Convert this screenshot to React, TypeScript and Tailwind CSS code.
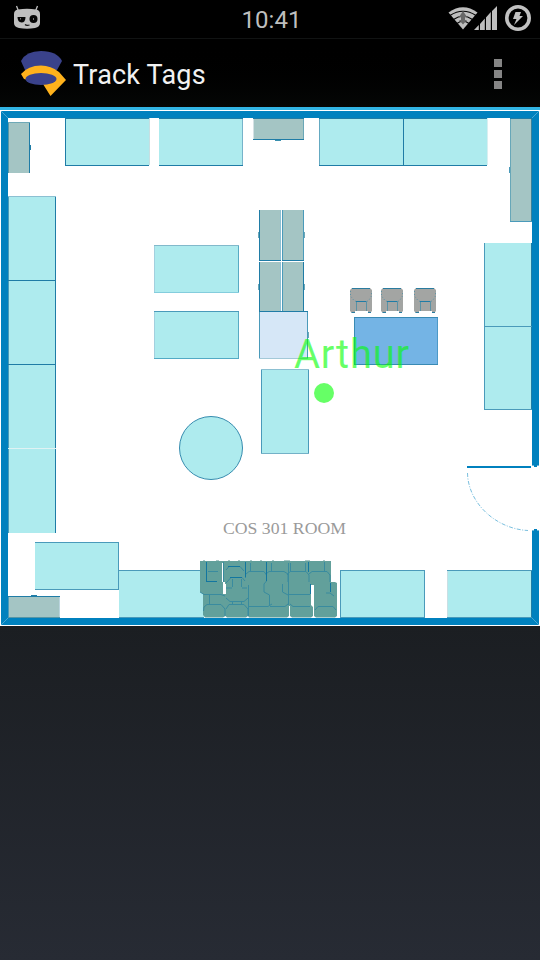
import React from "react";

const AQUA = "#aeebee";
const GREY = "#a4c5c4";
const DARK = "#1f7ca6";
const MID = "#4a9aba";
const PALE = "#8cc0d2";

type BoxProps = {
  x: number;
  y: number;
  w: number;
  h: number;
  fill?: string;
  t?: string;
  r?: string;
  b?: string;
  l?: string;
};

/* A piece of furniture with separately coloured one-pixel edges. */
function Box({ x, y, w, h, fill = AQUA, t, r, b, l }: BoxProps) {
  return (
    <g>
      <rect x={x} y={y} width={w} height={h} fill={fill} />
      {l && <rect x={x} y={y} width={1} height={h} fill={l} />}
      {r && <rect x={x + w - 1} y={y} width={1} height={h} fill={r} />}
      {t && <rect x={x} y={y} width={w} height={1} fill={t} />}
      {b && <rect x={x} y={y + h - 1} width={w} height={1} fill={b} />}
    </g>
  );
}

function Chair({ x }: { x: number }) {
  return (
    <g transform={`translate(${x} 288)`} shapeRendering="auto">
      <path d="M2 0H20L22 2V23L20 25H18V23H5V25H2L0 23V2Z" fill="#a3a5a3" />
      <path d="M2 .5H20M1.500 24.5H5M18 24.5H21" stroke="#2a7c9f" fill="none" />
      <path d="M.5 3V8L4 12.5L6 13.5H17L19 12L21.5 8V3" stroke="#5b92a5" fill="none" strokeDasharray="1 2" />
      <path d="M6 13.5H16.5" stroke="#1f7ca6" fill="none" />
      <path d="M6.5 14V23M16.5 14V23" stroke="#5b92a5" fill="none" />
    </g>
  );
}

function ChairPile() {
  return (
    <g shapeRendering="auto">
      <path
        d="M200 561H331V582H335L337 583V616L335 617.5H316L314 616V585H311V605L313 607V616L311 617.5H292L290 616V606H289V616L287 617.5H249L248 616L246 617.5H227L225.500 616L223 617.5H205L203 615V594L200 592Z"
        fill="#62a09b"
      />
      <path d="M222.500 563V582" stroke="#fff" />
      <rect x="223" y="582" width="2" height="12" fill="#fff" />
      <rect x="224" y="584" width="2" height="10" fill="#fff" />
      <g fill="none" stroke="#2f86a0" strokeWidth="1" opacity=".8">
        <path d="M208 571.500H218M200 592L204 594.500H221L225 596M209.500 595V604M203.500 611L204 607L207 604.500H221L225 609V616" />
        <path d="M223.500 562V582M226 570L229 566.500M240 566.500L244 571M226 583L231 577.500M242 577.500L245 581M232.500 579V587M241.500 579V587M226 588H232M242 588H247M226 598L230 601.500H244L248 598M232.500 602V604M241.500 602V604M226 609L229 604.500H244L248 609V616M245.500 562V578" />
        <path d="M250.500 563V571M246 574L249 571.500H264L266.500 575V581L264 584V592L269.500 595V605M248.500 585V616M249 606.500H268L272 604" />
        <path d="M271.500 563V571M266 574L269 571.500H284L288 574V582M288.500 563V605M282.500 584V592L288 595M270 606.500H285L288 604" />
        <path d="M290.500 563V571M287 575L290 571.500H306L309 575V582M305.500 563V571M289 594.500H310M290 604L293 606.500H310" />
        <path d="M324.500 562V571M309 574L312 571.500H327L330 575V582M315 610L318 606.500H333L336 610M326 593H330L334 596" />
      </g>
      <g fill="none" stroke="#1276a0" strokeWidth="1">
        <path d="M206.500 562V581M206 581.500H217M228 566.500H240M230 577.500H242M245.500 562V577M266.500 562V581M308.500 562V572M310.500 584V594M330.500 583V592" />
      </g>
      <path d="M203 560.500H205M216 560.500H219M228 560.500H230M238 560.500H240M250 560.500H252M260 560.500H262M272 560.500H274M284 560.500H290M305 560.500H310M323 560.500H325" stroke="#a9c7c5" />
    </g>
  );
}

function FloorPlan() {
  return (
    <svg viewBox="0 110 540 516" className="block h-[516px] w-full bg-white" shapeRendering="crispEdges">
      {/* outer walls */}
      <g fill="#0081be">
        <rect x="1" y="111" width="538" height="7" />
        <rect x="1" y="111" width="7" height="514" />
        <rect x="1" y="618" width="538" height="7" />
        <rect x="532" y="111" width="7" height="354" />
        <rect x="532" y="530" width="7" height="95" />
        <rect x="534" y="465" width="3" height="2" />
        <rect x="534" y="529" width="3" height="1" />
        <rect x="467" y="466" width="64" height="2" />
      </g>
      <path d="M532 465.500H534M537 465.500H539M532 530.500H534M537 530.500H539" stroke="#69b5d9" />
      <path d="M1 111L8 118M539 111L532 118M1 625L8 618M539 625L532 618" stroke="#45a6d2" strokeWidth="1" />
      <path d="M467.500 473C468 503 496 529 528 530.500" fill="none" stroke="#58afd5" strokeWidth=".8" strokeDasharray="4 1.5 1 1.5" shapeRendering="auto" />

      {/* furniture along the top wall */}
      <Box x={8} y={122} w={22} h={51} fill={GREY} l="#5796a6" r={DARK} t="#6ea9b7" />
      <rect x="30" y="145" width="1" height="5" fill={DARK} />
      <Box x={65} y={118} w={84} h={48} l={DARK} t={DARK} b={DARK} />
      <rect x="149" y="118" width="1" height="47" fill="#c7dfe2" />
      <Box x={159} y={118} w={84} h={48} r="#76b3ca" t={DARK} b={DARK} />
      <Box x={253} y={118} w={51} h={22} fill={GREY} l="#d4e1e4" r="#6aa7b7" t={DARK} b={DARK} />
      <rect x="275" y="140" width="6" height="1" fill="#388fae" />
      <Box x={319} y={118} w={85} h={48} l="#64a9c1" t={DARK} b={DARK} />
      <Box x={403} y={118} w={84} h={48} l={DARK} t={DARK} b={DARK} />
      <rect x="487" y="118" width="1" height="47" fill="#d8eff1" />
      <Box x={510} y={118} w={22} h={104} fill={GREY} l="#67a7b8" r="#37809b" t={DARK} b={MID} />
      <rect x="509" y="167" width="1" height="6" fill={MID} />

      {/* tables along the side walls */}
      <Box x={8} y={196} w={48} h={85} l={MID} r={DARK} t={PALE} b={DARK} />
      <Box x={8} y={281} w={48} h={84} l={MID} r={DARK} b={DARK} />
      <Box x={8} y={365} w={48} h={84} l={MID} r={DARK} b="#e0f2f3" />
      <Box x={8} y={449} w={48} h={84} l={MID} r={DARK} />
      <Box x={484} y={243} w={48} h={84} l={MID} r={DARK} b={MID} />
      <Box x={484} y={327} w={48} h={83} l={MID} r={DARK} b={MID} />

      {/* central furniture */}
      <Box x={154} y={245} w={85} h={48} l="#a3d0df" r="#58abc4" t="#82b9cb" b="#84cddd" />
      <Box x={154} y={311} w={85} h={48} l="#a3d0df" r="#58abc4" t={MID} b="#52aac5" />
      <Box x={259} y={210} w={22} h={51} fill={GREY} l={DARK} r={PALE} b={DARK} />
      <Box x={282} y={210} w={22} h={51} fill={GREY} l={MID} r={MID} b={DARK} />
      <Box x={259} y={262} w={22} h={49} fill={GREY} l={DARK} r={PALE} />
      <Box x={282} y={262} w={22} h={49} fill={GREY} l={MID} r={DARK} />
      <path d="M258.500 232V238M304.500 232V238M258.500 284V290M304.500 284V290M308.500 332V338" stroke="#6ba7b7" />
      <Box x={259} y={311} w={49} h={48} fill="#d6e7f7" l={MID} r={MID} t={DARK} b="#a3c9d8" />
      <Box x={261} y={369} w={48} h={85} l={MID} r={MID} t={PALE} b="#73b1c7" />
      <circle cx="211" cy="448" r="31.5" fill={AQUA} stroke="#368caf" strokeWidth="1" shapeRendering="auto" />
      <Chair x={350} />
      <Chair x={381} />
      <Chair x={414} />
      <Box x={354} y={317} w={84} h={48} fill="#74b4e5" l="#398ab4" r="#4c99c7" t="#398ab4" b="#398ab4" />

      {/* bottom wall */}
      <Box x={35} y={542} w={84} h={48} r={MID} t={MID} b={MID} />
      <Box x={8} y={596} w={52} h={22} fill={GREY} l={MID} r="#bbd5de" t={DARK} b="#5796a6" />
      <rect x="31" y="595" width="6" height="1" fill={DARK} />
      <Box x={119} y={570} w={85} h={48} t={MID} b={MID} />
      <Box x={340} y={570} w={85} h={48} l={MID} r={MID} t={MID} b={MID} />
      <Box x={447} y={570} w={85} h={48} l="#c9dfe4" r={DARK} t={MID} b={MID} />
      <ChairPile />

      <text x="223" y="533.5" textLength="123" lengthAdjust="spacingAndGlyphs" fill="#9a9a9a" className="font-['Liberation_Serif',serif] text-[17.5px]">
        COS 301 ROOM
      </text>

      {/* tracked tag */}
      <g fill="#00ff00" fillOpacity="0.6" shapeRendering="auto">
        <text x="294" y="368" textLength="115" className="font-[Roboto,sans-serif] text-[40px]">
          Arthur
        </text>
        <circle cx="324" cy="393" r="10" />
      </g>
    </svg>
  );
}

function RobotIcon() {
  return (
    <svg viewBox="0 0 28 26" className="mt-px h-[26px] w-7">
      <path d="M3.500 1L5.500 6M24.500 1L22.500 6" stroke="#bebebe" strokeWidth="1.300" />
      <path d="M5 4.500Q14 3 23 4.500Q27 5 27 9V18Q27 22 22 23Q14 24.500 6 23Q1 22 1 18V9Q1 5 5 4.500Z" fill="#bebebe" />
      <path d="M4.500 12H12.500Q12.500 17.500 8.500 17.500Q4.500 17 4.500 12Z" fill="#050505" />
      <circle cx="20.500" cy="14" r="4" fill="#050505" />
      <path d="M7.500 13V14.500M20.500 13V15" stroke="#777" />
      <path d="M12 19.500Q13.500 21 16.500 20" stroke="#111" strokeWidth="1.200" fill="none" />
    </svg>
  );
}

function SystemIcons() {
  return (
    <svg viewBox="448 4 84 28" className="h-7 w-[84px]">
      <path d="M448.500 12.500Q463 2 477.500 12.500L463 29.500Z" fill="#bebebe" />
      <path d="M450 15.500Q463 7 476 15.500M453.500 19.500Q463 13 472.500 19.500M457 23.500Q463 19 469 23.500" stroke="#050505" strokeWidth="1.200" fill="none" />
      <path d="M463 11L467 17H465V20H467L463 24.500L459 20H461V17H459Z" fill="#686868" />
      <path d="M474 30L478.800 25V30ZM480 24L484.800 18.500V30H480ZM486 17.500L490.800 12V30H486ZM492 11L497 6V30H492Z" fill="#bebebe" />
      <circle cx="518" cy="18" r="11.200" fill="none" stroke="#c1c1c1" strokeWidth="3.600" />
      <path d="M515.500 12H521L519.500 16H523L514 25L516.500 19H513Z" fill="#c1c1c1" />
    </svg>
  );
}

function AppLogo() {
  return (
    <svg viewBox="20 51 47 47" className="h-[47px] w-[47px]">
      <path d="M21 62Q26 52 41 52Q57 52 62 62L57 71H25Z" fill="#3a428b" />
      <path d="M21 75Q28 66.500 41 66.500Q51 66.500 59 73L66 81L50.500 97L43 85L24 80Z" fill="#ffb21c" />
      <ellipse cx="41" cy="80" rx="15.500" ry="6" fill="#3a428b" />
    </svg>
  );
}

export default function App() {
  return (
    <main className="flex h-[960px] w-[540px] flex-col overflow-hidden bg-black font-[Roboto,sans-serif]">
      <header className="flex h-[39px] shrink-0 justify-between border-b border-[#111313] bg-black pt-1 pr-2 pl-[13px]">
        <div className="flex w-[84px]">
          <RobotIcon />
        </div>
        <time className="mr-0.5 h-8 text-[24px] leading-8 text-[#bebebe]">10:41</time>
        <SystemIcons />
      </header>
      <nav className="flex h-[71px] shrink-0 items-center border-b-[3px] border-[#31b5e5] bg-linear-to-b from-black to-[#050706] pr-[38px] pl-5">
        <AppLogo />
        <h1 className="mt-1 ml-1.5 text-[27px] leading-8 tracking-[0.2px] whitespace-nowrap text-[#f2f2f2]">Track Tags</h1>
        <div className="mt-0.5 ml-auto flex flex-col gap-[3px]">
          <span className="size-2 bg-[#858585]" />
          <span className="size-2 bg-[#858585]" />
          <span className="size-2 bg-[#858585]" />
        </div>
      </nav>
      <section className="shrink-0">
        <FloorPlan />
      </section>
      <footer className="flex-1 bg-linear-to-b from-[#1b1e22] to-[#272b34]" />
    </main>
  );
}
